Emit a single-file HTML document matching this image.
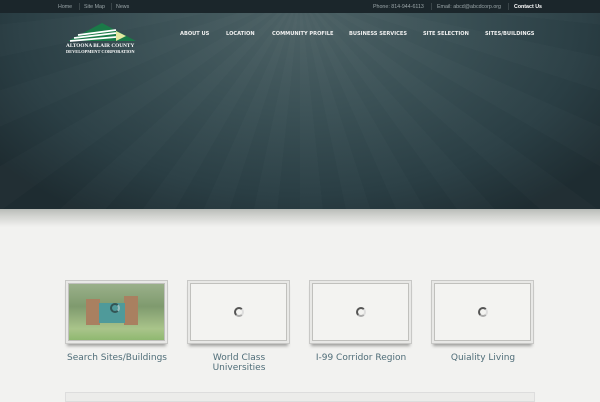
<!DOCTYPE html>
<html><head><style>
*{margin:0;padding:0;box-sizing:border-box}
body{width:600px;height:400px;overflow:hidden;background:#f2f2f0;font-family:"DejaVu Sans","Liberation Sans",sans-serif;position:relative}
.top{position:absolute;left:0;top:0;width:600px;height:13px;background:#1b262b;font-size:5.3px;color:#9aa5a8;font-family:"Liberation Sans",sans-serif}
.top span{position:absolute;top:4px}
.sep{width:1px;height:7px;background:#3a4549;position:absolute;top:3px}
.hero{position:absolute;top:13px;left:0;width:600px;height:196px;background:radial-gradient(ellipse 380px 230px at 300px 10px,#4d6266 0%,#3a5055 40%,#2a3e44 75%,#1e2c31 100%)}
.rays{position:absolute;top:13px;left:0;width:600px;height:196px;background:repeating-conic-gradient(from 90deg at 300px -20px,rgba(255,255,255,0.015) 0deg 6deg,rgba(0,0,0,0) 6deg 12deg);}
.nav{position:absolute;top:31px;font-size:5.1px;font-weight:bold;color:#f0f0f0;font-family:"DejaVu Sans",sans-serif}
.shadow{position:absolute;top:209px;left:0;width:600px;height:18px;background:linear-gradient(#b9bcb8,#d3d4d1 40%,#f2f2f0)}
.box{position:absolute;top:280px;width:103px;height:64px;background:#f3f3f1;border:1px solid #c8c8c6;box-shadow:inset 0 0 0 2px #e8e8e6,inset 0 0 0 3px #c0c0bd,0 4px 3px -2px rgba(0,0,0,.35)}
.spin{position:absolute;left:46px;top:26px;width:10px;height:10px;border-radius:50%;border:2px solid #555;border-right-color:#ddd;border-bottom-color:#aaa}
.cap{position:absolute;top:353px;width:120px;text-align:center;font-size:9px;color:#4f6d78;line-height:10px}
</style></head><body>
<div class="top">
<span style="left:58px">Home</span><div class="sep" style="left:79px"></div>
<span style="left:84px">Site Map</span><div class="sep" style="left:111px"></div>
<span style="left:116px">News</span>
<span style="left:373px">Phone: 814-944-6113</span><div class="sep" style="left:431px"></div>
<span style="left:437px">Email: abcd@abcdcorp.org</span><div class="sep" style="left:508px"></div>
<span style="left:514px;color:#fff;font-weight:bold">Contact Us</span>
</div>
<div class="hero"></div><div class="rays"></div>
<svg style="position:absolute;left:64px;top:20px" width="76" height="34">
<polygon points="4,21 38,3 72,21" fill="#1a7a48"/>
<polygon points="52,11 62,16 52,21" fill="#e5e8a0"/>
<path d="M14,15 L52,10 M10,18 L52,13 M6,21 L52,17" stroke="#fff" stroke-width="1.8"/>
<text x="2" y="27" font-size="5.3" fill="#fff" font-family="Liberation Serif" font-weight="bold">ALTOONA   BLAIR COUNTY</text>
<text x="2" y="33" font-size="4.4" fill="#fff" font-family="Liberation Serif" font-weight="bold">DEVELOPMENT CORPORATION</text>
</svg>
<div class="nav" style="left:180px">ABOUT US</div>
<div class="nav" style="left:226px">LOCATION</div>
<div class="nav" style="left:272px">COMMUNITY PROFILE</div>
<div class="nav" style="left:349px">BUSINESS SERVICES</div>
<div class="nav" style="left:423px">SITE SELECTION</div>
<div class="nav" style="left:485px">SITES/BUILDINGS</div>
<div class="shadow"></div>
<div class="box" style="left:65px;overflow:hidden"><div style="position:absolute;left:3px;top:3px;width:95px;height:56px;background:linear-gradient(#9ab08a,#7f9a6e 40%,#a9c48a 80%,#8fb870)"></div>
<div style="position:absolute;left:20px;top:18px;width:14px;height:26px;background:#a98060"></div>
<div style="position:absolute;left:58px;top:15px;width:14px;height:29px;background:#a98060"></div>
<div style="position:absolute;left:33px;top:22px;width:26px;height:20px;background:#4f9a9a"></div>
<div class="spin" style="left:44px;top:22px;border-color:#355;border-right-color:#9bb"></div></div>
<div class="box" style="left:187px"><div class="spin"></div></div>
<div class="box" style="left:309px"><div class="spin"></div></div>
<div class="box" style="left:431px"><div class="spin"></div></div>
<div class="cap" style="left:57px">Search Sites/Buildings</div>
<div class="cap" style="left:179px">World Class<br>Universities</div>
<div class="cap" style="left:301px">I-99 Corridor Region</div>
<div class="cap" style="left:423px">Quiality Living</div>
<div style="position:absolute;left:65px;top:392px;width:470px;height:10px;border:1px solid #ddd;background:#ececea"></div>
</body></html>
